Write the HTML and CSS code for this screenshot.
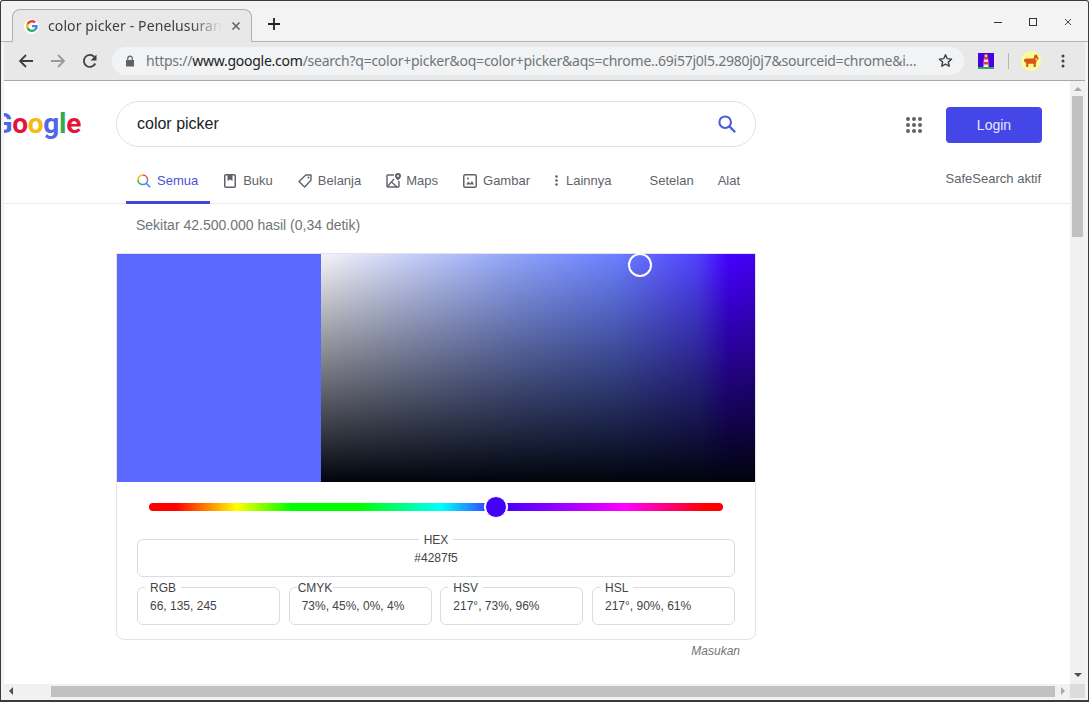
FILE: index.html
```html
<!DOCTYPE html>
<html lang="id">
<head>
<meta charset="utf-8">
<title>color picker - Penelusuran Google</title>
<link rel="stylesheet" href="styles.css">
</head>
<body>
<div class="window">
  <header class="tabstrip">
    <div class="tab">
      <span class="favicon">
        <svg width="12" height="12" viewBox="0 0 48 48"><path fill="#EA4335" d="M24 9.5c3.5 0 6.700 1.200 9.200 3.600l6.900-6.900C35.900 2.400 30.500 0 24 0 14.600 0 6.500 5.400 2.600 13.200l8 6.200C12.500 13.700 17.800 9.500 24 9.500z"/><path fill="#4285F4" d="M47 24.500c0-1.600-.1-3.100-.4-4.500H24v9h12.900c-.6 3-2.200 5.500-4.700 7.200l7.700 6C44.400 38.100 47 31.900 47 24.500z"/><path fill="#FBBC05" d="M10.600 28.600c-.5-1.500-.8-3-.8-4.600s.3-3.100.8-4.600l-8-6.200C.9 16.500 0 20.100 0 24s.9 7.500 2.600 10.800l8-6.200z"/><path fill="#34A853" d="M24 48c6.500 0 11.900-2.100 15.900-5.800l-7.700-6c-2.200 1.500-4.900 2.300-8.200 2.300-6.200 0-11.500-4.200-13.400-9.900l-8 6.200C6.500 42.600 14.600 48 24 48z"/></svg>
      </span>
      <span class="tab-title">color picker - Penelusuran Google</span>
      <svg class="tab-close" width="10" height="10" viewBox="0 0 10 10"><path d="M1.500 1.500l7 7M8.500 1.500l-7 7" stroke="#5f6368" stroke-width="1.600"/></svg>
    </div>
    <svg class="new-tab" width="14" height="14" viewBox="0 0 14 14"><path d="M7 1v12M1 7h12" stroke="#222" stroke-width="1.800"/></svg>
    <div class="win-controls">
      <svg width="10" height="10" viewBox="0 0 10 10"><path d="M1 5.500h8" stroke="#333" stroke-width="1"/></svg>
      <svg width="10" height="10" viewBox="0 0 10 10"><rect x="1.500" y="1.500" width="7" height="7" fill="none" stroke="#333" stroke-width="1"/></svg>
      <svg width="10" height="10" viewBox="0 0 10 10"><path d="M2 2l6 6M8 2l-6 6" stroke="#444" stroke-width="1"/></svg>
    </div>
  </header>

  <div class="inner">
    <nav class="toolbar">
      <svg class="tb-btn" width="16" height="16" viewBox="0 0 16 16"><path d="M15 8H2M8 2L2 8l6 6" fill="none" stroke="#3c4043" stroke-width="1.800"/></svg>
      <svg class="tb-btn" width="16" height="16" viewBox="0 0 16 16"><path d="M1 8h13M8 2l6 6-6 6" fill="none" stroke="#9a9a9a" stroke-width="1.800"/></svg>
      <svg class="tb-btn" width="16" height="16" viewBox="0 0 16 16"><path d="M13.300 10.500A6 6 0 1 1 12.300 3.800" fill="none" stroke="#3c4043" stroke-width="1.800"/><path d="M14.500 1.500v6h-6z" fill="#3c4043"/></svg>
      <div class="omnibox">
        <svg class="lock" width="10" height="12" viewBox="0 0 10 12"><path d="M1 5h8v6.500H1z" fill="#5f6368"/><path d="M2.800 5V3.300a2.200 2.200 0 0 1 4.400 0V5" fill="none" stroke="#5f6368" stroke-width="1.200"/></svg>
        <span class="url"><span class="url-dim">https://</span>www.google.com<span class="url-dim">/search?q=color+picker&amp;oq=color+picker&amp;aqs=chrome..69i57j0l5.2980j0j7&amp;sourceid=chrome&amp;i…</span></span>
        <svg class="star" width="15" height="15" viewBox="0 0 24 24"><path d="M12 2.800l2.800 6.300 6.900.7-5.200 4.600 1.500 6.800-6-3.500-6 3.500 1.500-6.800-5.200-4.600 6.900-.7z" fill="none" stroke="#3c4043" stroke-width="2.200" stroke-linejoin="round"/></svg>
      </div>
      <svg class="ext" width="16" height="16" viewBox="0 0 16 16"><rect width="16" height="16" fill="#4a00e0"/><rect y="14" width="16" height="2" fill="#2fa85a"/><path d="M6 4h4l.6 10H5.400z" fill="#f3e9e4"/><path d="M6 4h4v2.500H5.900zM5.700 9h4.600l.2 2.500H5.500z" fill="#e0384f"/><rect x="6.500" y="1.500" width="3" height="2.500" fill="#f7d34a"/></svg>
      <span class="tb-sep"></span>
      <span class="avatar">
        <svg width="17" height="15" viewBox="0 0 16 14"><path d="M1 6l2-1 7 0 1-4 1 1 1-1 1 3 1 1-2 2-1 3v3h-2v-3H5v3H3V9L1 8z" fill="#d9540f"/><path d="M11.500 5h2l-1 2z" fill="#fff"/></svg>
      </span>
      <svg class="menu" width="4" height="14" viewBox="0 0 4 14"><circle cx="2" cy="2" r="1.500" fill="#3c4043"/><circle cx="2" cy="7" r="1.500" fill="#3c4043"/><circle cx="2" cy="12" r="1.500" fill="#3c4043"/></svg>
    </nav>

    <div class="viewport">
      <div class="page-row">
        <main class="page">
          <div class="top-row">
            <div class="logo"><span class="c-blue">G</span><span class="c-red">o</span><span class="c-yellow">o</span><span class="c-blue">g</span><span class="c-green">l</span><span class="c-red">e</span></div>
            <div class="searchbox">
              <span class="query">color picker</span>
              <svg width="22" height="22" viewBox="0 0 24 24"><circle cx="10" cy="10" r="6.300" fill="none" stroke="#4a5be0" stroke-width="2.200"/><path d="M14.600 14.600l6.300 6.300" stroke="#4a5be0" stroke-width="2.400"/></svg>
            </div>
            <svg class="apps" width="16" height="16" viewBox="0 0 16 16">
              <g fill="#5f6368"><circle cx="2" cy="2" r="2"/><circle cx="8" cy="2" r="2"/><circle cx="14" cy="2" r="2"/><circle cx="2" cy="8" r="2"/><circle cx="8" cy="8" r="2"/><circle cx="14" cy="8" r="2"/><circle cx="2" cy="14" r="2"/><circle cx="8" cy="14" r="2"/><circle cx="14" cy="14" r="2"/></g>
            </svg>
            <button class="login">Login</button>
          </div>

          <div class="nav">
            <a class="nav-item active">
              <svg width="14" height="14" viewBox="0 0 14 14"><path d="M5.800 1A4.800 4.800 0 0 1 10.600 5.800" fill="none" stroke="#ea4335" stroke-width="1.500"/><path d="M1 5.800A4.800 4.800 0 0 1 5.800 1" fill="none" stroke="#fbbc05" stroke-width="1.500"/><path d="M1 5.800A4.800 4.800 0 0 0 5.800 10.600" fill="none" stroke="#34a853" stroke-width="1.500"/><path d="M5.800 10.600A4.800 4.800 0 0 0 10.600 5.800" fill="none" stroke="#4285f4" stroke-width="1.500"/><path d="M9.200 9.200l4 4" stroke="#4285f4" stroke-width="1.600"/></svg>
              <span>Semua</span>
            </a>
            <a class="nav-item wide-gap">
              <svg width="12" height="14" viewBox="0 0 12 14"><rect x=".75" y=".75" width="10.500" height="12.500" rx="1" fill="none" stroke="#5f6368" stroke-width="1.500"/><path d="M3.500 1h5v6L6 5.500 3.500 7z" fill="#5f6368"/></svg>
              <span>Buku</span>
            </a>
            <a class="nav-item">
              <svg width="14" height="14" viewBox="0 0 14 14"><path d="M7.800 1H13v5.200L6.600 13 1 7.400z" fill="none" stroke="#5f6368" stroke-width="1.400" stroke-linejoin="round"/><circle cx="10.500" cy="3.500" r="1" fill="#5f6368"/></svg>
              <span>Belanja</span>
            </a>
            <a class="nav-item tight-gap">
              <svg width="15" height="15" viewBox="0 0 15 15"><path d="M8 2H1.700A.7.700 0 0 0 1 2.700v10.600c0 .4.300.7.700.7h10.600c.4 0 .7-.3.700-.7V8" fill="none" stroke="#5f6368" stroke-width="1.400"/><path d="M1.500 13.500L8 6M6 9.500l5 4.500" stroke="#5f6368" stroke-width="1.300" fill="none"/><path d="M12 0a3 3 0 0 0-3 3c0 2 3 4.500 3 4.500S15 5 15 3a3 3 0 0 0-3-3z" fill="#5f6368"/><circle cx="12" cy="3" r="1" fill="#fff"/></svg>
              <span>Maps</span>
            </a>
            <a class="nav-item">
              <svg width="14" height="14" viewBox="0 0 14 14"><rect x=".75" y=".75" width="12.500" height="12.500" rx="1.500" fill="none" stroke="#5f6368" stroke-width="1.500"/><path d="M3 10.500l2.500-3 1.700 2 1.800-2.500 2 3.500z" fill="#5f6368"/><circle cx="5" cy="4.500" r="1" fill="#5f6368"/></svg>
              <span>Gambar</span>
            </a>
            <a class="nav-item more">
              <svg width="3" height="11" viewBox="0 0 3 11"><circle cx="1.500" cy="1.500" r="1.300" fill="#5f6368"/><circle cx="1.500" cy="5.500" r="1.300" fill="#5f6368"/><circle cx="1.500" cy="9.500" r="1.300" fill="#5f6368"/></svg>
              <span>Lainnya</span>
            </a>
            <a class="nav-item settings"><span>Setelan</span></a>
            <a class="nav-item tools"><span>Alat</span></a>
            <span class="safe">SafeSearch aktif</span>
          </div>

          <p class="stats">Sekitar 42.500.000 hasil (0,34 detik)</p>

          <section class="card">
            <div class="picker">
              <div class="swatch"></div>
              <div class="gradient"><span class="marker"></span></div>
            </div>
            <div class="slider"><span class="thumb"></span></div>
            <div class="fields">
              <fieldset class="field hex"><legend>HEX</legend><span>#4287f5</span></fieldset>
              <div class="field-row">
                <fieldset class="field"><legend>RGB</legend><span>66, 135, 245</span></fieldset>
                <fieldset class="field cmyk"><legend>CMYK</legend><span>73%, 45%, 0%, 4%</span></fieldset>
                <fieldset class="field"><legend>HSV</legend><span>217°, 73%, 96%</span></fieldset>
                <fieldset class="field"><legend>HSL</legend><span>217°, 90%, 61%</span></fieldset>
              </div>
            </div>
          </section>
          <div class="feedback">Masukan</div>
        </main>
        <div class="vscroll">
          <span class="arrow-up"></span>
          <span class="vthumb"></span>
          <span class="arrow-down"></span>
        </div>
      </div>
      <div class="hscroll">
        <span class="arrow-left"></span>
        <span class="hthumb"></span>
        <span class="arrow-right"></span>
        <span class="corner"></span>
      </div>
    </div>
  </div>
</div>
</body>
</html>
```
FILE: styles.css
```css
* { box-sizing: border-box; }
html, body { margin: 0; height: 100%; overflow: hidden; }
body { font-family: "Liberation Sans", Arial, sans-serif; background: #f3f3f3; }

.window {
  width: 1089px; height: 702px;
  display: flex; flex-direction: column;
  border: 1px solid #3b3b3b; border-width: 1px 1px 2px 1px;
  background: #f3f3f3;
  border-radius: 3px 3px 0 0;
}

/* tab strip */
.tabstrip {
  height: 41px; flex: none;
  display: flex; align-items: flex-end;
  padding-left: 11px;
  border-bottom: 1px solid #b4b4b4;
  position: relative;
}
.tab {
  width: 240px; height: 33px;
  margin-bottom: -1px;
  display: flex; align-items: center;
  background: #e8e8e8;
  border: 1px solid #b0b0b0; border-bottom: 0;
  border-radius: 8px 8px 0 0;
  padding: 0 12px 0 11px;
  position: relative;
}
.favicon {
  width: 15px; height: 15px; border-radius: 50%; background: #fff;
  display: flex; align-items: center; justify-content: center; flex: none;
}
.tab-title {
  margin-left: 9px; width: 174px; flex: none; overflow: hidden; white-space: nowrap;
  font: 14px/20px "Noto Sans", sans-serif; color: #3c4043; letter-spacing: .1px;
  -webkit-mask-image: linear-gradient(to right, #000 82%, transparent 100%);
  mask-image: linear-gradient(to right, #000 82%, transparent 100%);
}
.tab-close { margin-left: 9px; flex: none; }
.new-tab { margin: 0 0 10px 15px; }
.win-controls {
  margin-left: auto; margin-bottom: 14px; padding-right: 15px;
  display: flex; gap: 25px;
}

.inner { flex: 1; min-height: 0; display: flex; flex-direction: column; padding: 0 3px 2px; }

/* toolbar */
.toolbar {
  height: 39px; flex: none;
  display: flex; align-items: center;
  background: #e8e8e8;
  border-bottom: 1px solid #a8a8a8;
  padding: 0 0 1px 14px;
}
.tb-btn { margin-right: 16px; flex: none; }
.omnibox {
  margin-left: -2px; width: 852px; height: 28px;
  display: flex; align-items: center;
  background: #f1f3f4; border-radius: 14px;
  padding: 0 10px 0 13px;
}
.lock { flex: none; }
.url {
  margin-left: 11px; width: 772px; flex: none; white-space: nowrap; overflow: hidden;
  font: 14px/20px "Noto Sans", sans-serif; color: #202124; letter-spacing: -.25px;
}
.url-dim { color: #70757a; }
.star { margin-left: 20px; flex: none; }
.ext { margin-left: 14px; flex: none; }
.tb-sep { width: 1px; height: 16px; background: #b5b5b5; margin-left: 14px; flex: none; }
.avatar {
  width: 20px; height: 20px; border-radius: 50%; background: #fbfb9c;
  margin-left: 12px; flex: none;
  display: flex; align-items: center; justify-content: center;
}
.menu { margin-left: 20px; flex: none; }

/* viewport */
.viewport { flex: 1; min-height: 0; display: flex; flex-direction: column; background: #fff; }
.page-row { flex: 1; min-height: 0; display: flex; }
.page { flex: 1; min-width: 0; overflow: hidden; background: #fff; }

.top-row { display: flex; align-items: center; height: 46px; margin-top: 20px; }
.logo {
  width: 112px; flex: none; padding-right: 35px; margin-top: -1px;
  display: flex; justify-content: flex-end;
  font: 700 28px/32px Roboto, sans-serif; letter-spacing: -.3px;
}
.c-blue { color: #4f67e6; } .c-red { color: #e3143a; } .c-yellow { color: #f5b90f; } .c-green { color: #34a853; }
.searchbox {
  width: 640px; height: 46px; flex: none;
  display: flex; align-items: center; justify-content: space-between;
  border: 1px solid #dfe1e5; border-radius: 23px;
  padding: 0 17px 0 20px;
}
.query { font-size: 16px; color: #202124; }
.apps { margin: 2px 0 0 150px; flex: none; }
.login {
  margin: 2px 0 0 24px; width: 96px; height: 36px;
  background: #4546e8; color: #e8e8ff; border: 0; border-radius: 4px;
  font: 14px "Liberation Sans", sans-serif;
}

.nav {
  display: flex; align-items: stretch;
  height: 44px; margin-top: 13px;
  padding: 0 29px 0 122px;
  border-bottom: 1px solid #ebebeb;
  font-size: 13px; color: #5f6368;
}
.nav-item {
  display: flex; align-items: center; gap: 6px;
  margin-left: 25px; height: 44px;
  padding-bottom: 3px;
}
.nav-item.active {
  margin-left: 0; margin-right: -11px;
  padding: 0 12px 0 11px;
  color: #4a53d8;
  border-bottom: 3px solid #4546d8;
}
.nav-item.wide-gap { gap: 7px; }
.nav-item.tight-gap { gap: 5px; }
.nav-item.more { gap: 8px; }
.nav-item.settings { margin-left: 38px; }
.nav-item.tools { margin-left: 24px; }
.safe { margin-left: auto; align-self: center; padding-bottom: 6px; }

.stats { margin: 12px 0 0 132px; font-size: 14px; line-height: 18px; color: #70757a; }

.card {
  width: 640px; margin: 19px 0 0 112px;
  border: 1px solid #e3e3e3; border-radius: 0 0 8px 8px;
}
.picker { display: flex; height: 228px; }
.swatch { width: 204px; background: #5a68ff; }
.gradient {
  flex: 1; position: relative;
  background:
    linear-gradient(to bottom, transparent 0%, #00040c 100%),
    linear-gradient(to right, #f4f4f8 0%, #8fa3fa 45%, #6a80ff 68%, #5040ff 87%, #4400ff 94%, #4400f0 100%);
}
.marker {
  position: absolute; left: 307px; top: -1px;
  width: 24px; height: 24px; border-radius: 50%; border: 2px solid #fff;
}
.slider {
  position: relative; height: 8px; margin: 21px 32px 0;
  border-radius: 4px;
  background: linear-gradient(to right, #f00 4.7%, #ff0 15.3%, #0f0 24.7%, #0f0 36.6%, #0ff 51%, #4400ff 62%, #f0f 83%, #f00 97%);
}
.thumb {
  position: absolute; left: 336px; top: -7px;
  width: 22px; height: 22px; border-radius: 50%;
  background: #4400ff; border: 1px solid #fff;
  box-shadow: 0 0 0 1px #fff;
}
.fields { padding: 20px 20px 14px; display: flex; flex-direction: column; gap: 2px; }
.field {
  margin: 0; min-width: 0; height: 46px;
  border: 1px solid #dadce0; border-radius: 6px;
  padding: 0 12px;
  font-size: 12px; line-height: 14px; color: #444;
}
.field legend { padding: 2px 5px 0; margin-left: -5px; font-size: 12px; line-height: 14px; }
.field span { display: block; padding-top: 4px; }
.hex { text-align: center; }
.hex legend { margin: 0 auto; padding: 2px 5px 0; }
.field-row { display: grid; grid-template-columns: repeat(4, 143px); justify-content: space-between; }
.cmyk legend { padding: 2px 1px 0; }

.feedback {
  width: 624px; margin: 3px 0 0 112px; text-align: right;
  font-size: 12px; line-height: 16px; font-style: italic; color: #70757a;
}

/* scrollbars */
.vscroll {
  width: 15px; flex: none; background: #f1f1f1;
  display: flex; flex-direction: column; align-items: center;
}
.arrow-up { margin-top: 6px; border: 4px solid transparent; border-top: 0; border-bottom: 4px solid #a8a8a8; width: 0; height: 0; }
.vthumb { width: 11px; height: 141px; margin-top: 5px; background: #c1c1c1; }
.arrow-down { margin-top: auto; margin-bottom: 7px; border: 4px solid transparent; border-bottom: 0; border-top: 4px solid #505050; width: 0; height: 0; }
.hscroll { height: 14px; flex: none; display: flex; align-items: center; background: #f1f1f1; }
.arrow-left { margin-left: 5px; border: 4px solid transparent; border-left: 0; border-right: 4px solid #505050; width: 0; height: 0; }
.hthumb { width: 1004px; height: 11px; margin-left: 38px; background: #c1c1c1; }
.arrow-right { margin-left: 6px; border: 4px solid transparent; border-right: 0; border-left: 4px solid #a8a8a8; width: 0; height: 0; }
.corner { margin-left: auto; width: 15px; height: 14px; background: #dcdcdc; }
```
